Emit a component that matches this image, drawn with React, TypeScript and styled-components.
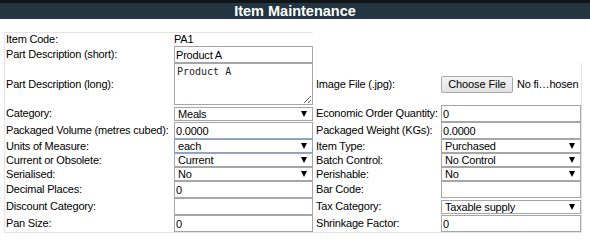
import React from "react";
import styled, { createGlobalStyle } from "styled-components";

const GlobalStyle = createGlobalStyle`
  html, body { margin: 0; padding: 0; background: #ffffff; }
  body {
    font-family: "Liberation Sans", Arial, sans-serif;
    font-size: 11px;
    letter-spacing: -0.2px;
    color: #000;
  }
`;

const Header = styled.div`
  height: 16px;
  border-top: 3px solid #101416;
  background: #233540;
  color: #ffffff;
  font-weight: bold;
  font-size: 14.5px;
  letter-spacing: 0;
  line-height: 16px;
  text-align: center;
`;

const Form = styled.div`
  display: grid;
  grid-template-columns: 169px 139px 128px 141px;
  align-items: stretch;
  width: fit-content;
  margin: 13px 0 0 4px;
  border-left: 1px solid #e4e4e4;
  border-bottom: 1px solid #e4e4e4;
`;

const Cell = styled.div<{ $top?: boolean; $edge?: boolean; $pad?: number }>`
  box-sizing: border-box;
  display: flex;
  align-items: center;
  padding-left: ${(p) => p.$pad ?? 0}px;
  border-top: ${(p) => (p.$top ? "1px solid #e4e4e4" : "none")};
  border-right: ${(p) => (p.$edge ? "1px solid #e4e4e4" : "none")};
  line-height: 13px;
  white-space: nowrap;
`;

const TextInput = styled.input`
  box-sizing: border-box;
  width: ${(p) => p.width}px;
  height: 17px;
  margin: 0;
  padding: 0 0 0 1px;
  border: 1px solid #a6a6a6;
  border-radius: 0;
  font-family: "Liberation Sans", Arial, sans-serif;
  font-size: 11px;
  letter-spacing: -0.2px;
  color: #000;
  background: #fff;
  outline: none;
`;

const TextArea = styled.textarea`
  box-sizing: border-box;
  width: 139px;
  height: 42px;
  margin: 0;
  padding: 2px 2px;
  border: 1px solid #a6a6a6;
  border-radius: 0;
  font-family: "DejaVu Sans Mono", monospace;
  font-size: 10px;
  letter-spacing: 0;
  line-height: 12px;
  color: #222;
  outline: none;
`;

const SelectWrap = styled.div<{ $w: number }>`
  position: relative;
  width: ${(p) => p.$w}px;
  height: 14px;
`;

const Select = styled.select<{ $focused?: boolean }>`
  appearance: none;
  -webkit-appearance: none;
  box-sizing: border-box;
  width: 100%;
  height: 14px;
  margin: 0;
  padding: 0 0 0 3px;
  border: 1px solid ${(p) => (p.$focused ? "#7fa4dc" : "#a6a6a6")};
  border-radius: 0;
  background: #fff;
  font-family: "Liberation Sans", Arial, sans-serif;
  font-size: 11px;
  letter-spacing: -0.2px;
  line-height: 12px;
  color: #000;
  outline: none;
`;

const Arrow = styled.span`
  position: absolute;
  right: 6px;
  top: 4px;
  width: 0;
  height: 0;
  border-left: 3.5px solid transparent;
  border-right: 3.5px solid transparent;
  border-top: 6px solid #000;
  pointer-events: none;
`;

const FileRow = styled.div`
  display: flex;
  align-items: center;
  gap: 4px;
`;

const FileButton = styled.button`
  box-sizing: border-box;
  width: 72px;
  height: 17px;
  margin: 0;
  padding: 0;
  border: 1px solid #a9a9a9;
  border-radius: 2px;
  background: linear-gradient(#f4f4f4, #e2e2e2);
  font-family: "Liberation Sans", Arial, sans-serif;
  font-size: 11px;
  letter-spacing: -0.1px;
  color: #000;
`;

const FileName = styled.span`
  font-size: 11px;
`;

type Field =
  | { kind: "value"; value: string }
  | { kind: "text"; value: string }
  | { kind: "textarea"; value: string }
  | { kind: "select"; value: string; focused?: boolean }
  | { kind: "file" };

type Row = { l: string; lf: Field; r?: string; rf?: Field };

const rows: Row[] = [
  { l: "Item Code:", lf: { kind: "value", value: "PA1" } },
  { l: "Part Description (short):", lf: { kind: "text", value: "Product A" } },
  {
    l: "Part Description (long):",
    lf: { kind: "textarea", value: "Product A" },
    r: "Image File (.jpg):",
    rf: { kind: "file" },
  },
  {
    l: "Category:",
    lf: { kind: "select", value: "Meals" },
    r: "Economic Order Quantity:",
    rf: { kind: "text", value: "0" },
  },
  {
    l: "Packaged Volume (metres cubed):",
    lf: { kind: "text", value: "0.0000" },
    r: "Packaged Weight (KGs):",
    rf: { kind: "text", value: "0.0000" },
  },
  {
    l: "Units of Measure:",
    lf: { kind: "select", value: "each", focused: true },
    r: "Item Type:",
    rf: { kind: "select", value: "Purchased" },
  },
  {
    l: "Current or Obsolete:",
    lf: { kind: "select", value: "Current" },
    r: "Batch Control:",
    rf: { kind: "select", value: "No Control" },
  },
  {
    l: "Serialised:",
    lf: { kind: "select", value: "No" },
    r: "Perishable:",
    rf: { kind: "select", value: "No" },
  },
  {
    l: "Decimal Places:",
    lf: { kind: "text", value: "0" },
    r: "Bar Code:",
    rf: { kind: "text", value: "" },
  },
  {
    l: "Discount Category:",
    lf: { kind: "text", value: "" },
    r: "Tax Category:",
    rf: { kind: "select", value: "Taxable supply" },
  },
  {
    l: "Pan Size:",
    lf: { kind: "text", value: "0" },
    r: "Shrinkage Factor:",
    rf: { kind: "text", value: "0" },
  },
];

function renderField(f: Field | undefined, width: number) {
  if (!f) return null;
  switch (f.kind) {
    case "value":
      return <span>{f.value}</span>;
    case "text":
      return <TextInput width={width} defaultValue={f.value} />;
    case "textarea":
      return <TextArea defaultValue={f.value} />;
    case "select":
      return (
        <SelectWrap $w={width}>
          <Select $focused={f.focused} defaultValue={f.value}>
            <option value={f.value}>{f.value}</option>
          </Select>
          <Arrow />
        </SelectWrap>
      );
    case "file":
      return (
        <FileRow>
          <FileButton type="button">Choose File</FileButton>
          <FileName>No fi…hosen</FileName>
        </FileRow>
      );
  }
}

export default function App() {
  return (
    <>
      <GlobalStyle />
      <Header>Item Maintenance</Header>
      <Form>
        {rows.map((row, i) => (
          <React.Fragment key={row.l}>
            <Cell $top={i === 0} $pad={1}>
              {row.l}
            </Cell>
            <Cell $top={i === 0}>{renderField(row.lf, 139)}</Cell>
            <Cell $pad={3}>{row.r}</Cell>
            <Cell $edge={i >= 2}>{renderField(row.rf, 140)}</Cell>
          </React.Fragment>
        ))}
      </Form>
    </>
  );
}
